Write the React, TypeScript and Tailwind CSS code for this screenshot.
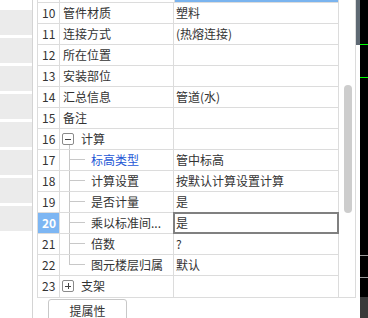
import React from 'react';

type Row = {
  no: number;
  name: string;
  value?: string;
  kind?: 'plain' | 'group-open' | 'group-closed' | 'child' | 'child-last';
  blue?: boolean;
  active?: boolean;
};

const rows: Row[] = [
  { no: 10, name: '管件材质', value: '塑料' },
  { no: 11, name: '连接方式', value: '(热熔连接)' },
  { no: 12, name: '所在位置' },
  { no: 13, name: '安装部位' },
  { no: 14, name: '汇总信息', value: '管道(水)' },
  { no: 15, name: '备注' },
  { no: 16, name: '计算', kind: 'group-open' },
  { no: 17, name: '标高类型', value: '管中标高', kind: 'child', blue: true },
  { no: 18, name: '计算设置', value: '按默认计算设置计算', kind: 'child' },
  { no: 19, name: '是否计量', value: '是', kind: 'child' },
  { no: 20, name: '乘以标准间...', value: '是', kind: 'child', active: true },
  { no: 21, name: '倍数', value: '?', kind: 'child' },
  { no: 22, name: '图元楼层归属', value: '默认', kind: 'child-last' },
  { no: 23, name: '支架', kind: 'group-closed' },
];

const ToggleBox = ({ open }: { open: boolean }) => (
  <div className="w-[12px] h-[12px] border border-[#8a8a8a] rounded-[2px] bg-white flex items-center justify-center">
    <div className="relative w-[6px] h-[6px] flex items-center justify-center">
      <div className="w-[6px] h-px bg-[#444]" />
      {!open && <div className="absolute w-px h-[6px] bg-[#444]" />}
    </div>
  </div>
);

const NameCell = ({ row }: { row: Row }) => {
  const kind = row.kind ?? 'plain';
  if (kind === 'group-open' || kind === 'group-closed') {
    return (
      <div className="w-[114px] flex items-stretch pl-[2px] border-r border-[#dcdcdc]">
        <div className="w-[12px] flex flex-col items-center pt-[4px]">
          <ToggleBox open={kind === 'group-open'} />
          {kind === 'group-open' && <div className="flex-1 w-px bg-[#c8c8c8] ml-[2px]" />}
        </div>
        <span className="pl-[7px] leading-[20px]">{row.name}</span>
      </div>
    );
  }
  if (kind === 'child' || kind === 'child-last') {
    return (
      <div className="w-[114px] flex items-stretch pl-[9px] border-r border-[#dcdcdc]">
        <div className="w-[16px] flex flex-col">
          <div className="h-[10px] border-l border-b border-[#c8c8c8]" />
          <div className={`flex-1 ${kind === 'child' ? 'border-l border-[#c8c8c8]' : ''}`} />
        </div>
        <span className={`pl-[6px] leading-[20px] whitespace-nowrap ${row.blue ? 'text-[#2457d6]' : ''}`}>
          {row.name}
        </span>
      </div>
    );
  }
  return (
    <div className="w-[114px] pl-[3px] leading-[20px] border-r border-[#dcdcdc]">{row.name}</div>
  );
};

export default function App() {
  return (
    <div
      className="w-[368px] h-[318px] overflow-hidden bg-white flex text-[12px] text-[#333]"
      style={{ fontFamily: '"Noto Sans CJK SC", "Liberation Sans", sans-serif' }}
    >
      {/* left list */}
      <div className="w-[32px] flex flex-col gap-[3px] pt-[10px]">
        {Array.from({ length: 8 }).map((_, i) => (
          <div key={i} className="h-[25px] bg-[#ebebeb]" />
        ))}
      </div>
      <div className="w-px bg-[#d4d4d4]" />

      {/* property panel */}
      <div className="w-[323px] pl-[4px] flex flex-col">
        <div className="flex border-l border-r border-b border-[#dcdcdc]">
          <div className="flex flex-col w-[301px]">
            {/* partially scrolled row 9 */}
            <div className="flex h-[3px] border-b border-[#dcdcdc]">
              <div className="w-[22px] border-r border-[#dcdcdc]" />
              <div className="w-[115px] border-r border-[#dcdcdc]" />
              <div className="flex-1 bg-[#7ab4ef]" />
            </div>
            {rows.map((row, i) => (
              <div
                key={row.no}
                className={`flex h-[21px] ${i < rows.length - 1 ? 'border-b border-[#dcdcdc]' : ''}`}
              >
                <div
                  className={`w-[22px] pl-[4px] leading-[20px] border-r border-[#dcdcdc] ${
                    row.active ? 'bg-[#7db6f3] text-white font-bold' : ''
                  }`}
                >
                  {row.no}
                </div>
                <NameCell row={row} />
                <div className="relative flex-1 pl-[2px] leading-[20px] whitespace-nowrap">
                  {row.value}
                  {row.active && (
                    <div className="absolute left-[-1px] top-[-1px] right-[-1px] bottom-[-1px] border-2 border-[#808080]" />
                  )}
                </div>
              </div>
            ))}
          </div>
          {/* scrollbar */}
          <div className="w-[17px] border-l border-[#dcdcdc] pl-[5px] pt-[85px]">
            <div className="w-[8px] h-[128px] rounded-full bg-[#cdcdcd]" />
          </div>
        </div>
        <div className="mt-[1px] ml-[11px] w-[79px] h-[30px] border border-[#c8c8c8] rounded-t-[3px] flex justify-center pt-[1px] leading-[20px] text-[#333]">
          提属性
        </div>
      </div>

      {/* right edge */}
      <div className="w-[4px] flex flex-col">
        <div className="h-[45px] bg-[#5f6a74]" />
      </div>
      <div className="w-[8px] bg-black flex flex-col">
        <div className="h-[44px]" />
        <div className="h-px bg-[#00ff00]" />
        <div className="h-[32px]" />
        <div className="h-px bg-[#00ff00]" />
        <div className="h-[177px]" />
        <div className="h-px bg-[#9a9a9a]" />
        <div className="h-[21px]" />
        <div className="h-px bg-[#9a9a9a]" />
        <div className="h-[19px]" />
        <div className="flex-1 bg-[#3a3a3a]" />
      </div>
    </div>
  );
}
